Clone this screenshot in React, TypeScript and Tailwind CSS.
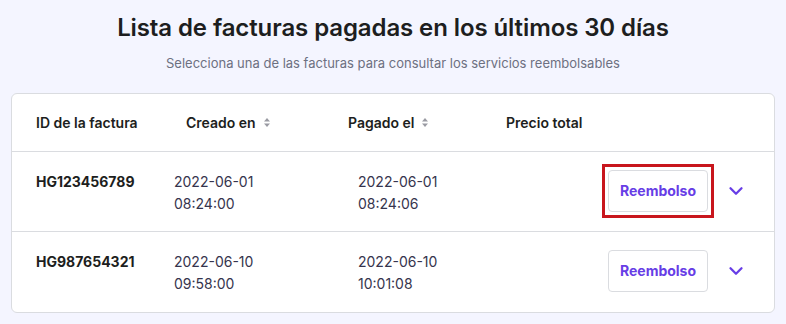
import { ChevronDown } from "lucide-react";

type Invoice = {
  id: string;
  createdDate: string;
  createdTime: string;
  paidDate: string;
  paidTime: string;
  highlighted?: boolean;
};

const invoices: Invoice[] = [
  {
    id: "HG123456789",
    createdDate: "2022-06-01",
    createdTime: "08:24:00",
    paidDate: "2022-06-01",
    paidTime: "08:24:06",
    highlighted: true,
  },
  {
    id: "HG987654321",
    createdDate: "2022-06-10",
    createdTime: "09:58:00",
    paidDate: "2022-06-10",
    paidTime: "10:01:08",
  },
];

function SortIcon() {
  return (
    <svg width="8" height="11" viewBox="0 0 8 11" className="ml-[7px]">
      <path d="M4 1 L7 4.5 H1 Z" fill="#9a9ba3" />
      <path d="M4 10 L7 6.5 H1 Z" fill="#9a9ba3" />
    </svg>
  );
}

export default function App() {
  return (
    <div
      className="w-[786px] h-[324px] bg-[#f4f5ff] overflow-hidden text-[#1d1e20]"
      style={{ fontFamily: "Inter, 'Noto Sans', sans-serif" }}
    >
      <div className="flex flex-col items-center pt-[12px]">
        <h1 className="text-[24px] leading-[32px] font-semibold tracking-[-0.1px]">
          Lista de facturas pagadas en los últimos 30 días
        </h1>
        <p className="mt-[10px] text-[13px] leading-[18px] text-[#6d7081]">
          Selecciona una de las facturas para consultar los servicios reembolsables
        </p>
      </div>

      <div className="mx-[11px] mt-[21px] bg-white border border-[#dadce0] rounded-[6px]">
        <div className="flex items-center h-[58px] border-b border-[#dadce0] text-[14px] font-semibold">
          <div className="w-[174px] pl-[24px]">ID de la factura</div>
          <div className="w-[162px] flex items-center">
            Creado en
            <SortIcon />
          </div>
          <div className="w-[158px] flex items-center">
            Pagado el
            <SortIcon />
          </div>
          <div>Precio total</div>
        </div>

        {invoices.map((inv, i) => (
          <div
            key={inv.id}
            className={
              "flex items-start h-[80px] pt-[19px] text-[14px] leading-[22px] " +
              (i < invoices.length - 1 ? "border-b border-[#dadce0]" : "")
            }
          >
            <div className="w-[162px] pl-[24px] font-bold">{inv.id}</div>
            <div className="w-[184px] text-[#36344d]">
              <div>{inv.createdDate}</div>
              <div>{inv.createdTime}</div>
            </div>
            <div className="w-[244px] text-[#36344d]">
              <div>{inv.paidDate}</div>
              <div>{inv.paidTime}</div>
            </div>
            <div className="flex items-center mt-[-7px]">
              <div
                className={
                  "p-[3px] border-[3px] " +
                  (inv.highlighted ? "border-[#c8161d]" : "border-transparent")
                }
              >
                <button className="w-[100px] h-[42px] border border-[#dadce0] rounded-[4px] bg-white text-[#673de6] text-[14px] font-bold">
                  Reembolso
                </button>
              </div>
              <ChevronDown className="ml-[11px] w-[22px] h-[22px] text-[#673de6]" strokeWidth={2.5} />
            </div>
          </div>
        ))}
      </div>
    </div>
  );
}
